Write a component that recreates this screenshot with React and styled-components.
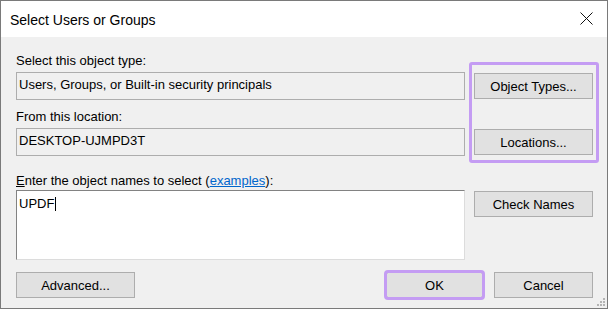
import React from 'react';
import styled, { createGlobalStyle } from 'styled-components';

const Global = createGlobalStyle`
  html, body {
    margin: 0;
    padding: 0;
    background: #f0f0f0;
  }
  * {
    box-sizing: border-box;
  }
`;

const App = () => {
  return (
    <>
      <Global />
      <Window>
        <TitleBar>
          <Title>Select Users or Groups</Title>
          <CloseButton>
            <svg width="13" height="13" viewBox="0 0 13 13">
              <path d="M0.5 0.5 L12.5 12.5 M12.5 0.5 L0.5 12.5" stroke="#111" strokeWidth="1" fill="none" />
            </svg>
          </CloseButton>
        </TitleBar>
        <Body>
          <Columns>
            <LeftCol>
              <Label>Select this object type:</Label>
              <ReadOnlyBox>Users, Groups, or Built-in security principals</ReadOnlyBox>
              <Label gap={9}>From this location:</Label>
              <ReadOnlyBox>DESKTOP-UJMPD3T</ReadOnlyBox>
              <Label gap={17} tight>
                <u>E</u>nter the object names to select (<Link>examples</Link>):
              </Label>
              <NamesBox>
                UPDF<Caret />
              </NamesBox>
            </LeftCol>
            <RightCol>
              <Highlight />
              <Button top={20}>Object Types...</Button>
              <Button top={30}>Locations...</Button>
              <Button top={36}>Check Names</Button>
            </RightCol>
          </Columns>
          <Footer>
            <Button width={119}>Advanced...</Button>
            <FooterRight>
              <Button width={97} marked>OK</Button>
              <Button width={99}>Cancel</Button>
            </FooterRight>
          </Footer>
        </Body>
        <Grip>
          <svg width="10" height="10" viewBox="0 0 10 10">
            <rect x="8" y="2" width="2" height="2" fill="#b4b4b4" />
            <rect x="5" y="5" width="2" height="2" fill="#b4b4b4" />
            <rect x="8" y="5" width="2" height="2" fill="#b4b4b4" />
            <rect x="2" y="8" width="2" height="2" fill="#b4b4b4" />
            <rect x="5" y="8" width="2" height="2" fill="#b4b4b4" />
            <rect x="8" y="8" width="2" height="2" fill="#b4b4b4" />
          </svg>
        </Grip>
      </Window>
    </>
  );
};

const Window = styled.div`
  position: relative;
  width: 608px;
  height: 309px;
  border: 1px solid #7a7a7a;
  background: #f0f0f0;
  display: flex;
  flex-direction: column;
  font-family: "Liberation Sans", Arial, sans-serif;
  font-size: 13px;
  color: #000;
`;

const TitleBar = styled.div`
  height: 36px;
  background: #fff;
  display: flex;
  align-items: center;
  justify-content: space-between;
  padding: 2px 14px 0 9px;
`;

const Title = styled.div`
  font-size: 14px;
  line-height: 16px;
  color: #000;
`;

const CloseButton = styled.div`
  display: flex;
  align-items: center;
  justify-content: center;
  width: 13px;
  height: 13px;
  margin-top: -3px;
`;

const Body = styled.div`
  flex: 1;
  display: flex;
  flex-direction: column;
  padding: 16px 14px 0 15px;
`;

const Columns = styled.div`
  display: grid;
  grid-template-columns: 449px 119px;
  column-gap: 9px;
`;

const LeftCol = styled.div`
  display: flex;
  flex-direction: column;
`;

const RightCol = styled.div`
  position: relative;
  display: flex;
  flex-direction: column;
`;

const Label = styled.div`
  line-height: 15px;
  margin-top: ${(p) => p.gap || 0}px;
  margin-bottom: ${(p) => (p.tight ? 2 : 4)}px;
  white-space: nowrap;
`;

const Link = styled.span`
  color: #0066cc;
  text-decoration: underline;
`;

const ReadOnlyBox = styled.div`
  height: 28px;
  border: 1px solid #adadad;
  background: #f0f0f0;
  padding: 4px 2px 0;
  line-height: 15px;
  white-space: nowrap;
`;

const NamesBox = styled.div`
  height: 70px;
  background: #fff;
  border-top: 1px solid #828282;
  border-left: 1px solid #828282;
  border-right: 1px solid #dcdcdc;
  border-bottom: 1px solid #dcdcdc;
  padding: 5px 2px 0;
  line-height: 15px;
  display: flex;
  align-items: flex-start;
`;

const Caret = styled.span`
  display: inline-block;
  width: 1px;
  height: 14px;
  margin-left: 1px;
  margin-top: 1px;
  background: #000;
`;

const Button = styled.div`
  height: 26px;
  width: ${(p) => (p.width ? `${p.width}px` : '100%')};
  margin-top: ${(p) => p.top || 0}px;
  background: #e1e1e1;
  border: 1px solid #adadad;
  display: flex;
  align-items: center;
  justify-content: center;
  line-height: 15px;
  white-space: nowrap;
  outline: ${(p) => (p.marked ? '3px solid #c49cf3' : 'none')};
  outline-offset: -1px;
  border-radius: ${(p) => (p.marked ? '2px' : '0')};
`;

const Highlight = styled.div`
  position: absolute;
  left: -5px;
  top: 9px;
  width: 130px;
  height: 101px;
  border: 3px solid #c49cf3;
  border-radius: 3px;
  pointer-events: none;
`;

const Footer = styled.div`
  display: flex;
  justify-content: space-between;
  align-items: center;
  margin-top: 12px;
`;

const FooterRight = styled.div`
  display: flex;
  gap: 11px;
`;

const Grip = styled.div`
  position: absolute;
  right: 2px;
  bottom: 2px;
  width: 10px;
  height: 10px;
  display: flex;
`;

export default App;
